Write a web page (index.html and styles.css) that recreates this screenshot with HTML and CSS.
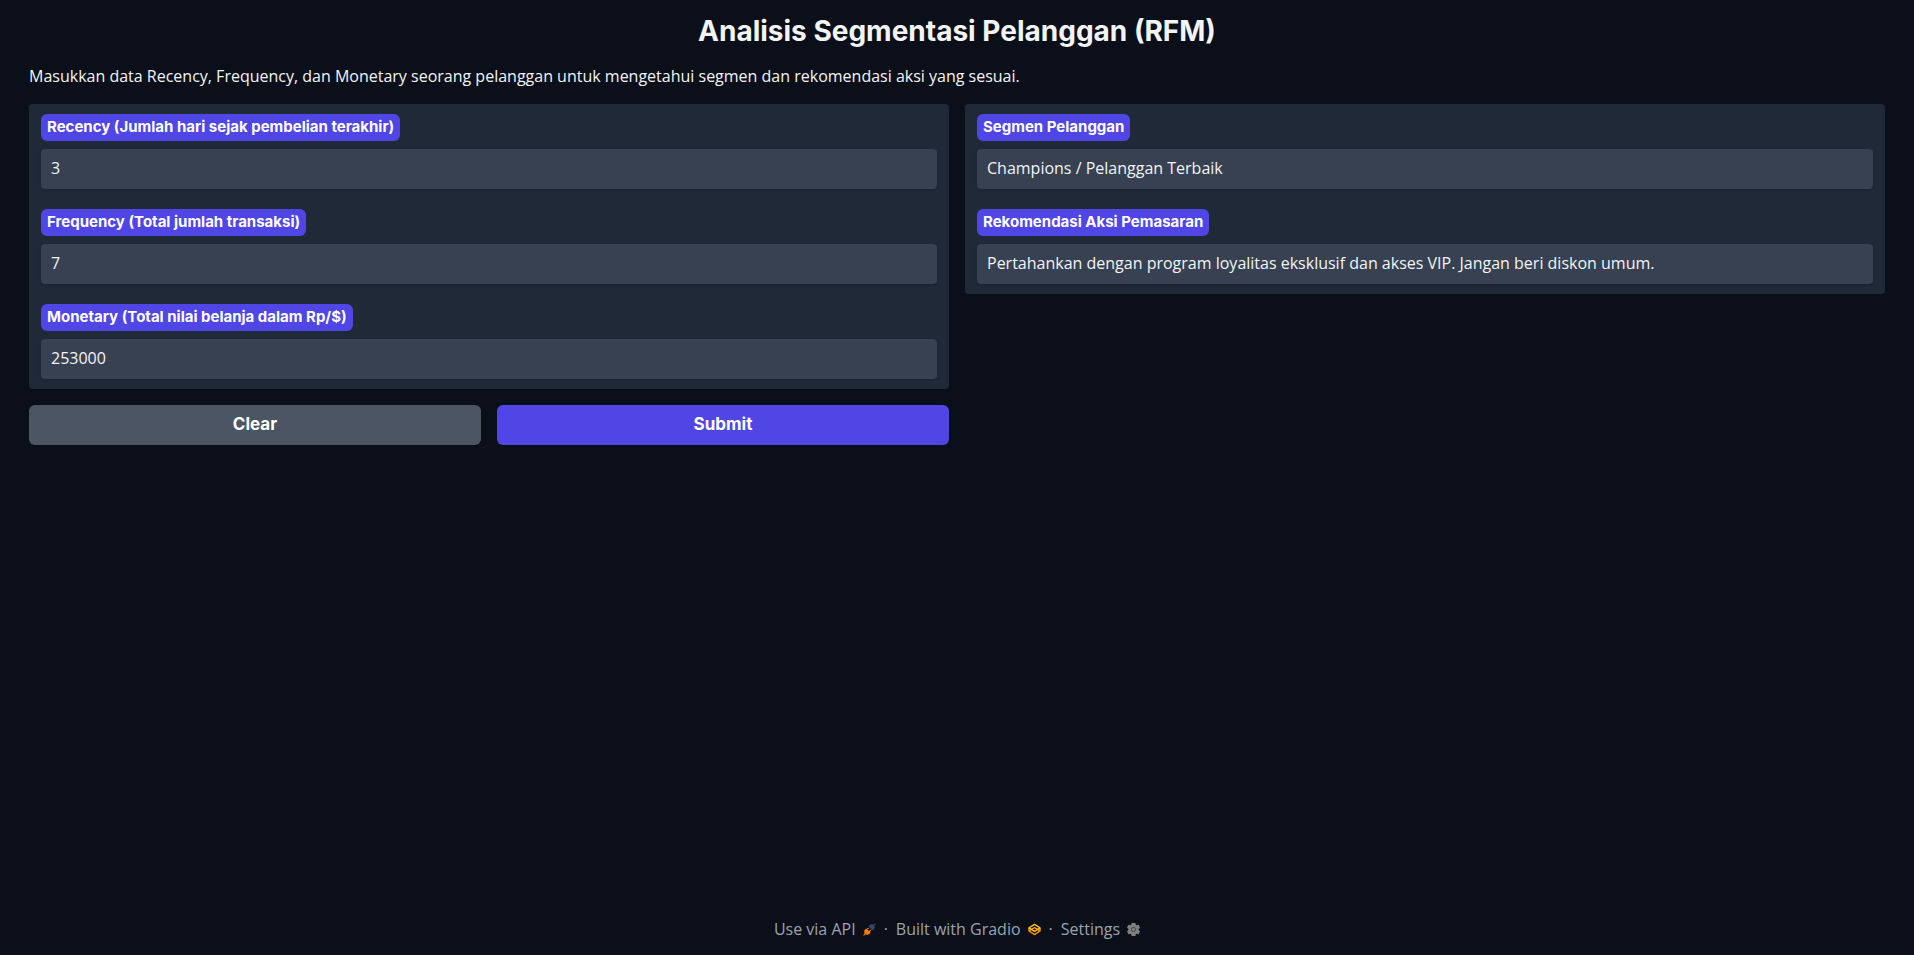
FILE: index.html
```html
<!DOCTYPE html>
<html lang="id">
<head>
<meta charset="utf-8">
<meta name="viewport" content="width=device-width, initial-scale=1">
<title>Analisis Segmentasi Pelanggan (RFM)</title>
<link rel="stylesheet" href="styles.css">
</head>
<body>
<main class="app">
  <h1 class="title">Analisis Segmentasi Pelanggan (RFM)</h1>
  <p class="intro">Masukkan data Recency, Frequency, dan Monetary seorang pelanggan untuk mengetahui segmen dan rekomendasi aksi yang sesuai.</p>
  <div class="columns">
    <form class="column">
      <div class="panel">
        <div class="field">
          <label class="label" for="recency">Recency (Jumlah hari sejak pembelian terakhir)</label>
          <input class="input" id="recency" type="number" value="3">
        </div>
        <div class="field">
          <label class="label" for="frequency">Frequency (Total jumlah transaksi)</label>
          <input class="input" id="frequency" type="number" value="7">
        </div>
        <div class="field">
          <label class="label" for="monetary">Monetary (Total nilai belanja dalam Rp/$)</label>
          <input class="input" id="monetary" type="number" value="253000">
        </div>
      </div>
      <div class="actions">
        <button class="button" type="reset">Clear</button>
        <button class="button primary" type="button">Submit</button>
      </div>
    </form>
    <div class="column">
      <div class="panel">
        <div class="field">
          <label class="label" for="segment">Segmen Pelanggan</label>
          <input class="input" id="segment" type="text" readonly value="Champions / Pelanggan Terbaik">
        </div>
        <div class="field">
          <label class="label" for="action">Rekomendasi Aksi Pemasaran</label>
          <input class="input" id="action" type="text" readonly value="Pertahankan dengan program loyalitas eksklusif dan akses VIP. Jangan beri diskon umum.">
        </div>
      </div>
    </div>
  </div>
</main>
<footer class="footer">
  <a class="footer-link" href="#api">Use via API
    <svg class="icon" viewBox="0 0 28 28" aria-hidden="true">
      <path fill="#3c4555" d="M26.94 2.94a1.33 1.33 0 0 0-1.88-1.88l-2.49 2.48c-1.45-.95-3.03-1.11-4.4-.9-1.62.25-3.06 1.03-3.78 1.75l-2 2a1.33 1.33 0 0 0 0 1.89l7.33 7.33c.52.52 1.37.52 1.89 0l2-2c.72-.72 1.5-2.16 1.75-3.79.21-1.36.05-2.94-.9-4.39z"/>
      <path fill="#ff7c00" d="M12.28 12.94a1.33 1.33 0 0 0-1.89-1.88l-2.1 2.1-.9-.77a1.33 1.33 0 0 0-1.67 0l-1.33 1.67c-.72.72-1.5 2.16-1.75 3.78-.21 1.37-.05 2.95.9 4.4l-2.48 2.82a1.33 1.33 0 0 0 1.88 1.88l2.49-2.48c1.45.95 3.03 1.11 4.4.9 1.62-.25 3.06-1.03 3.78-1.75l2-2a1.33 1.33 0 0 0 0-1.89l-.78-.78 2.11-2a1.33 1.33 0 0 0-1.88-1.88l-2.12 2-4.66-4.67z"/>
    </svg>
  </a>
  <span class="dot">·</span>
  <a class="footer-link" href="#gradio">Built with Gradio
    <svg class="icon" viewBox="0 0 28 28" aria-hidden="true">
      <g fill="none" stroke-linejoin="round" stroke-width="2.800">
        <path stroke="#ff8c00" d="M2 11v6l12 8 12-8v-6"/>
        <path stroke="#ff9d00" d="m2 17 12-7 12 7"/>
        <path stroke="#ffc400" d="M14 3 26 10.500 14 18 2 10.500z"/>
      </g>
    </svg>
  </a>
  <span class="dot">·</span>
  <a class="footer-link" href="#settings">Settings
    <svg class="icon" viewBox="0 0 28 28" aria-hidden="true">
      <path fill="#808080" d="M10 0h8l1 4 2 1 4-1 3 6-3 3v2l3 3-3 6-4-1-2 1-1 4h-8l-1-4-2-1-4 1-3-6 3-3v-2l-3-3 3-6 4 1 2-1z"/>
      <circle cx="14" cy="14" r="4.500" fill="none" stroke="#3c4048" stroke-width="2"/>
    </svg>
  </a>
</footer>
</body>
</html>
```
FILE: styles.css
```css
* {
  box-sizing: border-box;
}

body {
  margin: 0;
  min-height: 100vh;
  display: flex;
  flex-direction: column;
  background: #0b0f19;
  color: #f3f4f6;
  font-family: "Open Sans", sans-serif;
  font-size: 16px;
  line-height: 24px;
}

.app {
  flex: 1;
  padding: 12px 29px 0;
}

.title,
.label,
.button {
  font-family: Inter, "Open Sans", sans-serif;
  font-weight: 700;
}

.title {
  margin: 0 0 14px;
  font-size: 28px;
  line-height: 38px;
  text-align: center;
}

.intro {
  margin: 0 0 16px;
}

.columns {
  display: grid;
  grid-template-columns: 1fr 1fr;
  gap: 16px;
  align-items: start;
}

.column {
  display: grid;
  gap: 16px;
}

.panel {
  border-radius: 4px;
  background: #1f2937;
}

.field {
  display: flex;
  flex-direction: column;
  align-items: flex-start;
  gap: 8px;
  padding: 10px 12px;
}

.label {
  padding: 3px 6px 4px;
  border-radius: 6px;
  background: #4f46e5;
  color: #fff;
  font-size: 15px;
  line-height: 20px;
}

.input {
  width: 100%;
  height: 40px;
  padding: 0 10px 2px;
  border: 0;
  border-radius: 4px;
  background: #374151;
  box-shadow: 0 1px 3px rgb(0 0 0 / 12%);
  color: #f3f4f6;
  font: inherit;
  appearance: textfield;
}

.input::-webkit-inner-spin-button {
  appearance: none;
  margin: 0;
}

.actions {
  display: grid;
  grid-template-columns: 1fr 1fr;
  gap: 16px;
}

.button {
  height: 40px;
  padding: 0 16px 2px;
  border: 0;
  border-radius: 6px;
  background: #4b5563;
  color: #fff;
  font-size: 17px;
}

.primary {
  background: #4f46e5;
}

.footer {
  display: flex;
  justify-content: center;
  gap: 8px;
  padding: 0 0 14px;
  color: #9ca3af;
}

.footer-link {
  display: flex;
  align-items: center;
  gap: 7px;
  color: inherit;
  text-decoration: none;
}

.icon {
  width: 13px;
  height: 13px;
}
```
